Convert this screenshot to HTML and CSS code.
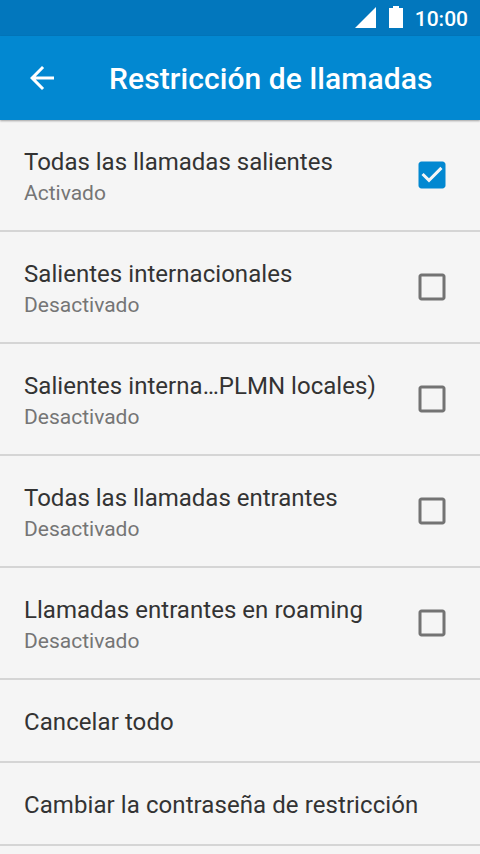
FILE: index.html
```html
<!DOCTYPE html>
<html lang="es">

<head>
   <meta charset="UTF-8">
   <meta name="viewport" content="width=device-width, initial-scale=1.0">
   <title>Restricción de llamadas</title>
   <link rel="stylesheet" href="styles.css">
</head>

<body>
   <div class="status-bar">
      <svg class="signal" width="22" height="22" viewBox="0 0 22 22">
         <path d="M21 0v21H0z" fill="#fff" />
      </svg>
      <svg class="battery" width="14" height="22" viewBox="0 0 14 22">
         <path d="M4 0h6v2h4v20H0V2h4z" fill="#fff" />
      </svg>
      <span class="clock">10:00</span>
   </div>

   <header class="app-bar">
      <svg class="back" width="36" height="36" viewBox="0 0 24 24">
         <path d="M20 11H7.83l5.59-5.59L12 4l-8 8 8 8 1.41-1.41L7.83 13H20v-2z" fill="#fff" />
      </svg>
      <h1>Restricción de llamadas</h1>
   </header>

   <main class="list">
      <div class="row">
         <div class="text">
            <div class="title">Todas las llamadas salientes</div>
            <div class="summary">Activado</div>
         </div>
         <svg class="checkbox" width="36" height="36" viewBox="0 0 24 24">
            <path d="M19 3H5c-1.11 0-2 .9-2 2v14c0 1.1.89 2 2 2h14c1.11 0 2-.9 2-2V5c0-1.1-.89-2-2-2zm-9 14l-5-5 1.41-1.41L10 14.17l7.59-7.59L19 8l-9 9z" fill="#0288d1" />
         </svg>
      </div>
      <div class="row">
         <div class="text">
            <div class="title spaced">Salientes internacionales</div>
            <div class="summary">Desactivado</div>
         </div>
         <svg class="checkbox" width="36" height="36" viewBox="0 0 24 24">
            <path d="M19 5v14H5V5h14m0-2H5c-1.1 0-2 .9-2 2v14c0 1.1.9 2 2 2h14c1.1 0 2-.9 2-2V5c0-1.1-.9-2-2-2z" fill="#737373" />
         </svg>
      </div>
      <div class="row">
         <div class="text">
            <div class="title spaced">Salientes interna…PLMN locales)</div>
            <div class="summary">Desactivado</div>
         </div>
         <svg class="checkbox" width="36" height="36" viewBox="0 0 24 24">
            <path d="M19 5v14H5V5h14m0-2H5c-1.1 0-2 .9-2 2v14c0 1.1.9 2 2 2h14c1.1 0 2-.9 2-2V5c0-1.1-.9-2-2-2z" fill="#737373" />
         </svg>
      </div>
      <div class="row">
         <div class="text">
            <div class="title">Todas las llamadas entrantes</div>
            <div class="summary">Desactivado</div>
         </div>
         <svg class="checkbox" width="36" height="36" viewBox="0 0 24 24">
            <path d="M19 5v14H5V5h14m0-2H5c-1.1 0-2 .9-2 2v14c0 1.1.9 2 2 2h14c1.1 0 2-.9 2-2V5c0-1.1-.9-2-2-2z" fill="#737373" />
         </svg>
      </div>
      <div class="row">
         <div class="text">
            <div class="title spaced">Llamadas entrantes en roaming</div>
            <div class="summary">Desactivado</div>
         </div>
         <svg class="checkbox" width="36" height="36" viewBox="0 0 24 24">
            <path d="M19 5v14H5V5h14m0-2H5c-1.1 0-2 .9-2 2v14c0 1.1.9 2 2 2h14c1.1 0 2-.9 2-2V5c0-1.1-.9-2-2-2z" fill="#737373" />
         </svg>
      </div>
      <div class="row single">
         <div class="title">Cancelar todo</div>
      </div>
      <div class="row single">
         <div class="title">Cambiar la contraseña de restricción</div>
      </div>
   </main>
</body>

</html>
```
FILE: styles.css
```css
* {
   box-sizing: border-box;
}

body {
   margin: 0;
   height: 854px;
   overflow: hidden;
   font-family: Roboto, sans-serif;
   background: #f5f5f5;
   color: #333;
}

svg {
   display: block;
   flex: none;
}

.status-bar {
   display: flex;
   align-items: center;
   justify-content: flex-end;
   height: 36px;
   padding-right: 12px;
   background: #0277bd;
   color: #fff;
}

.battery {
   margin: 0 0 2px 12px;
}

.clock {
   margin-left: 12px;
   padding-top: 2px;
   font-size: 21px;
   font-weight: 500;
}

.app-bar {
   display: flex;
   align-items: center;
   height: 84px;
   padding-left: 24px;
   background: #0288d1;
   box-shadow: 0 1px 2px rgba(0, 0, 0, 0.35);
   color: #fff;
}

.app-bar h1 {
   margin: 0 0 0 49px;
   font-size: 30px;
   font-weight: 500;
   letter-spacing: 0.09px;
   white-space: nowrap;
}

.row {
   display: flex;
   align-items: center;
   justify-content: space-between;
   height: 112px;
   padding: 0 30px 0 24px;
   border-bottom: 2px solid #d5d5d5;
}

.text {
   padding-top: 4px;
}

.title {
   font-size: 24px;
   line-height: 32px;
   white-space: nowrap;
}

.spaced {
   letter-spacing: 0.04px;
}

.summary {
   font-size: 21px;
   line-height: 30px;
   color: #757575;
}

.single {
   height: 83px;
   padding-top: 2px;
   letter-spacing: 0.08px;
}
```
